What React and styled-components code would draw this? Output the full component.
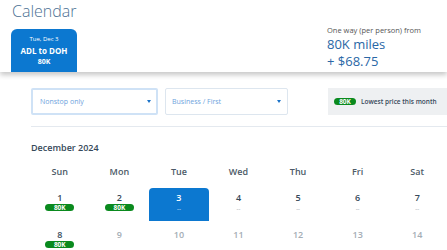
import React from 'react';
import styled, { createGlobalStyle } from 'styled-components';

const GlobalStyle = createGlobalStyle`
  html, body {
    margin: 0;
    padding: 0;
    background: #fff;
    font-family: "Open Sans", "Liberation Sans", sans-serif;
    overflow: hidden;
  }
`

const Page = styled.div`
  width: 447px;
  height: 250px;
  overflow: hidden;
  background: #fff;
`

const Header = styled.header`
  height: 72px;
  display: flex;
  justify-content: space-between;
  background: #fff;
  box-shadow: 0 3px 5px rgba(0, 0, 0, 0.22);
  position: relative;
  z-index: 1;
`

const HeaderLeft = styled.div`
  display: flex;
  flex-direction: column;
  justify-content: space-between;
  padding-left: 11px;
`

const Title = styled.h1`
  margin: 0;
  font-size: 16px;
  font-weight: 300;
  color: #4d7194;
  line-height: 20px;
  padding-left: 1px;
  padding-top: 1px;
`

const Tab = styled.div`
  width: 66px;
  height: 43px;
  background: #0c78d0;
  border-radius: 6px 6px 0 0;
  color: #fff;
  display: flex;
  flex-direction: column;
  align-items: center;
  padding-top: 6px;
  box-sizing: border-box;
`

const TabDate = styled.div`
  font-size: 6px;
  line-height: 9px;
`

const TabRoute = styled.div`
  font-size: 8px;
  font-weight: 700;
  line-height: 13px;
`

const TabPrice = styled.div`
  font-size: 7px;
  font-weight: 700;
  line-height: 10px;
`

const PriceBlock = styled.div`
  width: 120px;
  padding-top: 25px;
`

const PriceLabel = styled.div`
  font-size: 7.5px;
  color: #555;
  line-height: 11px;
`

const PriceValue = styled.div`
  font-size: 13px;
  color: #2a67a6;
  line-height: 17px;
`

const Filters = styled.div`
  display: flex;
  align-items: center;
  padding: 16px 0 0 31px;
`

const Select = styled.div`
  width: ${p => p.w}px;
  height: 27px;
  box-sizing: border-box;
  border: ${p => (p.focused ? '2px solid #cfe2f6' : '1px solid #dde6ef')};
  border-radius: 2px;
  display: flex;
  align-items: center;
  justify-content: space-between;
  padding: 0 ${p => (p.focused ? 5 : 6)}px 0 ${p => (p.focused ? 7 : 6)}px;
  margin-right: 7px;
  font-size: 7px;
  color: #6ea3dd;
`

const Caret = styled.span`
  width: 0;
  height: 0;
  border-left: 2.5px solid transparent;
  border-right: 2.5px solid transparent;
  border-top: 3px solid #1a73c8;
`

const Legend = styled.div`
  margin-left: auto;
  width: 119px;
  height: 27px;
  background: #eef0f2;
  display: flex;
  align-items: center;
  padding-left: 6px;
  box-sizing: border-box;
  gap: 5px;
  font-size: 6.5px;
  font-weight: 600;
  color: #36495a;
`

const Badge = styled.span`
  display: inline-flex;
  align-items: center;
  justify-content: center;
  width: ${p => p.w || 29}px;
  height: 7px;
  border-radius: 4px;
  background: #0a8a1e;
  color: #fff;
  font-size: 6.5px;
  font-weight: 700;
  line-height: 7px;
`

const Divider = styled.hr`
  margin: 11px 0 0 31px;
  border: none;
  border-top: 1px solid #e4e9ef;
`

const Month = styled.h2`
  margin: 15px 0 0 31px;
  font-size: 9px;
  font-weight: 600;
  color: #36495a;
  line-height: 12px;
`

const Grid = styled.div`
  display: grid;
  grid-template-columns: repeat(7, 1fr);
  width: 417px;
  margin: 12px 0 0 30px;
  row-gap: 4px;
`

const DayName = styled.div`
  text-align: center;
  font-size: 9px;
  font-weight: 600;
  color: #4c5a67;
  line-height: 12px;
  margin-bottom: 6px;
`

const Cell = styled.div`
  height: 33px;
  display: flex;
  flex-direction: column;
  align-items: center;
  padding-top: 4px;
  box-sizing: border-box;
  background: ${p => (p.selected ? '#0c78d0' : 'transparent')};
  border-radius: 4px 4px 0 0;
  color: ${p => (p.selected ? '#fff' : p.muted ? '#a4adb5' : '#36495a')};
`

const DayNum = styled.div`
  font-size: 9px;
  font-weight: 600;
  line-height: 12px;
`

const Dash = styled.div`
  font-size: 6px;
  line-height: 8px;
  margin-top: 1px;
  color: ${p => (p.selected ? '#fff' : '#8a949c')};
`

const days = ['Sun', 'Mon', 'Tue', 'Wed', 'Thu', 'Fri', 'Sat'];

const dates = [
  { d: 1, price: '80K' },
  { d: 2, price: '80K' },
  { d: 3, selected: true },
  { d: 4 },
  { d: 5 },
  { d: 6 },
  { d: 7 },
  { d: 8, price: '80K' },
  { d: 9, muted: true },
  { d: 10, muted: true },
  { d: 11, muted: true },
  { d: 12, muted: true },
  { d: 13, muted: true },
  { d: 14, muted: true },
];

const App = () => {
  return (
    <Page>
      <GlobalStyle />
      <Header>
        <HeaderLeft>
          <Title>Calendar</Title>
          <Tab>
            <TabDate>Tue, Dec 3</TabDate>
            <TabRoute>ADL to DOH</TabRoute>
            <TabPrice>80K</TabPrice>
          </Tab>
        </HeaderLeft>
        <PriceBlock>
          <PriceLabel>One way (per person) from</PriceLabel>
          <PriceValue>80K miles</PriceValue>
          <PriceValue>+ $68.75</PriceValue>
        </PriceBlock>
      </Header>

      <Filters>
        <Select w={127} focused>
          Nonstop only
          <Caret />
        </Select>
        <Select w={123}>
          Business / First
          <Caret />
        </Select>
        <Legend>
          <Badge w={22}>80K</Badge>
          Lowest price this month
        </Legend>
      </Filters>

      <Divider />
      <Month>December 2024</Month>

      <Grid>
        {days.map(name => (
          <DayName key={name}>{name}</DayName>
        ))}
        {dates.map(item => (
          <Cell key={item.d} selected={item.selected} muted={item.muted}>
            <DayNum>{item.d}</DayNum>
            {item.price ? (
              <Badge>{item.price}</Badge>
            ) : !item.muted ? (
              <Dash selected={item.selected}>--</Dash>
            ) : null}
          </Cell>
        ))}
      </Grid>
    </Page>
  );
};

export default App;
